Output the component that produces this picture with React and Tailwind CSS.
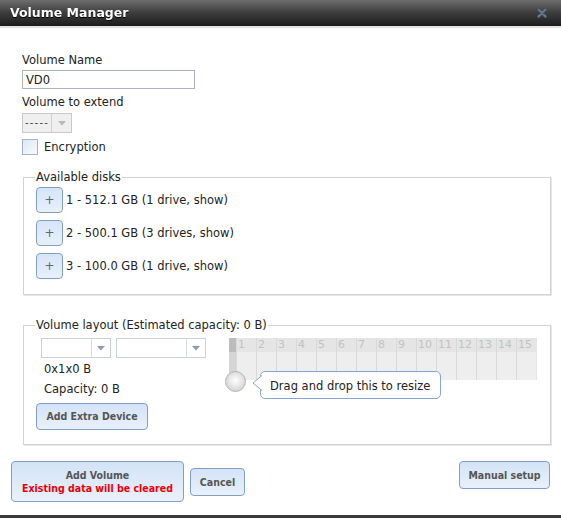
import React from "react";

const btn =
  "border border-[#7f9fc9] rounded-[4px] bg-linear-to-b from-[#d3e3f6] to-[#e9f1fb] text-[#555] font-['DejaVu_Sans_Condensed','DejaVu_Sans',sans-serif] font-bold text-[10.5px] leading-[13px]";

function PlusRow({ label }) {
  return (
    <div className="flex items-center">
      <div className={"w-[27px] h-[26px] flex items-center justify-center border border-[#7f9fc9] rounded-[4px] bg-linear-to-b from-[#d6e5f7] to-[#e8f0fb] text-[#666] text-[12px]"}>
        +
      </div>
      <span className="ml-[3px] text-[#222]">{label}</span>
    </div>
  );
}

function Drop({ w }) {
  return (
    <div className={"h-[20px] flex border border-[#c9d1dc] bg-white " + w}>
      <div className="flex-1" />
      <div className="w-[19px] border-l border-[#d5dbe3] flex items-center justify-center">
        <svg width="8" height="5" viewBox="0 0 8 5">
          <polygon points="0,0 8,0 4,4.5" fill="#8a9cb4" />
        </svg>
      </div>
    </div>
  );
}

export default function App() {
  const cols = Array.from({ length: 15 }, (_, i) => i + 1);
  return (
    <div className="w-[561px] h-[518px] bg-white flex flex-col overflow-hidden font-['DejaVu_Sans',sans-serif] text-[11.5px] leading-[14px] text-[#222]">
      {/* Title bar */}
      <div className="h-[28px] shrink-0 border-b-2 border-[#e2e2e2] bg-linear-to-b from-[#6e6e6e] via-[#3c3c3c] to-[#1d1d1d] flex items-center justify-between pl-[10px] pr-[14px]">
        <span className="text-white font-bold text-[12.5px] leading-[16px] drop-shadow-[0_1px_0_#000]">
          Volume Manager
        </span>
        <svg width="10" height="10" viewBox="0 0 10 10">
          <path d="M1.5 1.5 L8.5 8.5 M8.5 1.5 L1.5 8.5" stroke="#3e4a5a" strokeWidth="3.2" strokeLinecap="round" />
          <path d="M1.5 1.5 L8.5 8.5 M8.5 1.5 L1.5 8.5" stroke="#66788f" strokeWidth="1.8" strokeLinecap="round" />
        </svg>
      </div>

      {/* Body */}
      <div className="px-[22px] pt-[25px] flex flex-col">
        <div>Volume Name</div>
        <div className="mt-[3px] w-[173px] h-[19px] border border-[#aab4c2] flex items-center px-[3px]">VD0</div>
        <div className="mt-[6px]">Volume to extend</div>
        <div className="mt-[4px] w-[50px] h-[20px] flex border border-[#c9c9c9] bg-[#efefef]">
          <div className="flex-1 flex items-center pl-[2px] text-[#444] text-[10px] tracking-[1.2px]">-----</div>
          <div className="w-[20px] border-l border-[#d0d0d0] flex items-center justify-center">
            <svg width="8" height="5" viewBox="0 0 8 5">
              <polygon points="0,0 8,0 4,4.5" fill="#b8b8b8" />
            </svg>
          </div>
        </div>
        <div className="mt-[6px] flex items-center">
          <div className="w-[16px] h-[16px] border border-[#a6b4c8] bg-linear-to-br from-[#dde7f3] to-[#f8fbff]" />
          <span className="ml-[6px]">Encryption</span>
        </div>

        {/* Available disks */}
        <fieldset className="mt-[15px] ml-[1px] w-[528px] border border-[#d2d2d2] shadow-[1px_1px_0_#e6e6e6] pl-[12px] pb-[15px] pt-[3px]">
          <legend className="px-[1px] -ml-[1px] leading-[14px]">Available disks</legend>
          <div className="flex flex-col gap-[7px]">
            <PlusRow label="1 - 512.1 GB (1 drive, show)" />
            <PlusRow label="2 - 500.1 GB (3 drives, show)" />
            <PlusRow label="3 - 100.0 GB (1 drive, show)" />
          </div>
        </fieldset>

        {/* Volume layout */}
        <fieldset className="mt-[23px] ml-[1px] w-[528px] border border-[#d2d2d2] shadow-[1px_1px_0_#e6e6e6] pl-[12px] pb-[14px] pt-[6px]">
          <legend className="px-[1px] -ml-[1px] leading-[14px]">Volume layout (Estimated capacity: 0 B)</legend>
          <div className="flex">
            <div className="w-[193px] flex flex-col">
              <div className="flex gap-[5px] ml-[5px]">
                <Drop w="w-[70px]" />
                <Drop w="w-[90px]" />
              </div>
              <div className="mt-[4px] ml-[8px]">0x1x0 B</div>
              <div className="mt-[6px] ml-[8px]">Capacity: 0 B</div>
              <div className={"mt-[7px] w-[112px] h-[27px] flex items-center justify-center " + btn}>
                Add Extra Device
              </div>
            </div>
            <div className="relative">
              <div className="flex w-[308px] h-[42px] border-r border-[#e4e4e4]">
                <div className="w-[7px] flex flex-col">
                  <div className="h-[14px] bg-[#bcbcbc]" />
                  <div className="flex-1 bg-[#d5d5d5]" />
                </div>
                {cols.map((n) => (
                  <div key={n} className="w-[20px] flex flex-col border-l border-[#d9d9d9]">
                    <div className="h-[14px] bg-[#e5e5e5] text-[#c2c2c2] text-[11px] leading-[14px] pl-[1px]">{n}</div>
                    <div className="flex-1 bg-[#eeeeee]" />
                  </div>
                ))}
              </div>
              <div className="absolute left-[-4px] top-[33px] w-[21px] h-[21px] rounded-full border border-[#b3b3b3] bg-[radial-gradient(circle_at_50%_45%,#ffffff_0%,#e6e6e6_45%,#c6c6c6_100%)]" />
              <div className="absolute left-[31px] top-[33px] w-[181px] h-[28px] bg-white border border-[#86a6cf] rounded-[5px] flex items-center pl-[9px] pt-[2px]">
                <svg className="absolute left-[-9px] top-[3px]" width="10" height="16" viewBox="0 0 10 16">
                  <polygon points="10,0 1,8 10,16" fill="#ffffff" />
                  <polyline points="10,0.5 1,8 10,15.5" fill="none" stroke="#86a6cf" strokeWidth="1" />
                </svg>
                <span>Drag and drop this to resize</span>
              </div>
            </div>
          </div>
        </fieldset>
      </div>

      {/* Bottom buttons */}
      <div className="mt-[16px] px-[11px] flex items-start">
        <div className={"w-[173px] h-[41px] flex flex-col items-center justify-center " + btn}>
          <span>Add Volume</span>
          <span className="text-[#e8000b]">Existing data will be cleared</span>
        </div>
        <div className={"ml-[6px] mt-[7px] w-[55px] h-[28px] flex items-center justify-center " + btn}>Cancel</div>
        <div className="flex-1" />
        <div className={"w-[91px] h-[28px] flex items-center justify-center " + btn}>Manual setup</div>
      </div>

      <div className="mt-auto h-[3px] bg-[#3a3a3a] shrink-0" />
    </div>
  );
}
